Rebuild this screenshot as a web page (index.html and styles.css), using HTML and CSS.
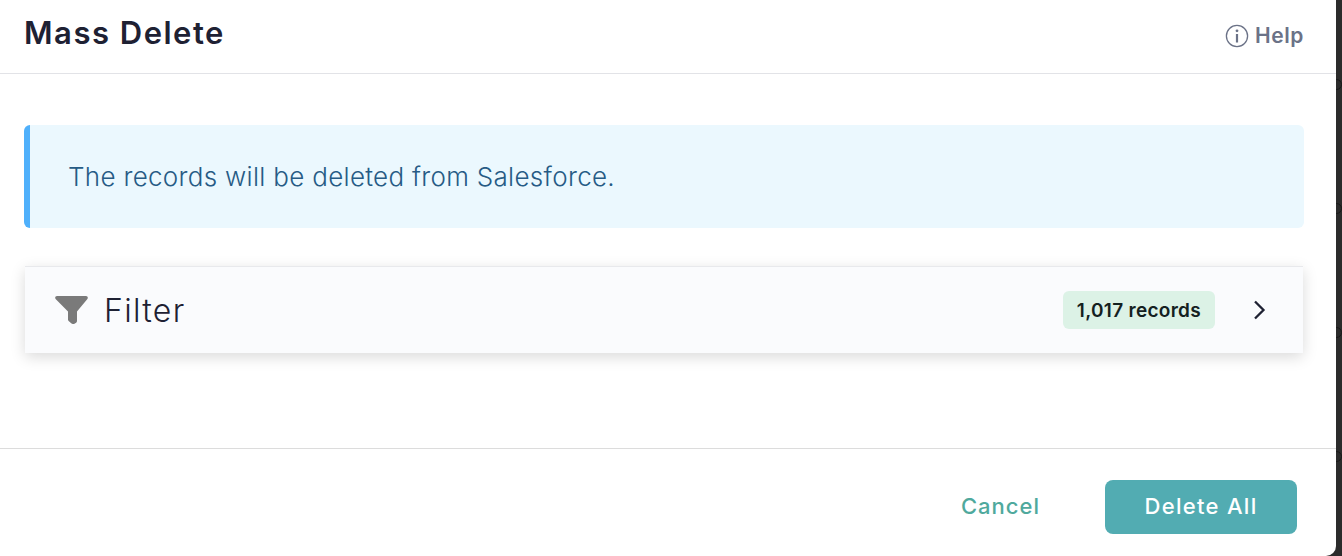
FILE: index.html
```html
<!DOCTYPE html>
<html lang="en">
<head>
  <meta charset="UTF-8" />
  <title>Mass Delete</title>
  <link rel="stylesheet" href="styles.css">
</head>
<body>
  <div class="modal">
    <header class="modal-header">
      <h1>Mass Delete</h1>
      <a class="help" href="#">
        <svg width="24" height="24" viewBox="0 0 24 24" fill="none" stroke="#6b7287" stroke-width="1.3">
          <circle cx="12" cy="12" r="10.6"/>
          <path d="M12 10v8.500" stroke-width="2.200"/>
          <circle cx="12" cy="6.800" r="1.400" fill="#6b7287" stroke="none"/>
        </svg>
        <span>Help</span>
      </a>
    </header>

    <div class="modal-body">
      <div class="notice">The records will be deleted from Salesforce.</div>

      <div class="filter-row">
        <svg class="filter-icon" width="33" height="28" viewBox="0 0 33 28">
          <path d="M2 0h29c1.600 0 2.400 1.800 1.400 3L22 15.500V25c0 .8-.3 1.300-.9 1.700l-1.600 1c-1.300.6-2.400.3-3.300-.5l-2.300-2c-.6-.5-.9-1-.9-1.700v-8L.6 3C-.4 1.800.4 0 2 0z" fill="#7a7a7a"/>
        </svg>
        <span class="filter-label">Filter</span>
        <span class="badge">1,017 records</span>
        <svg class="chevron" width="14" height="20" viewBox="0 0 14 20" fill="none" stroke="#1e2133" stroke-width="2.300">
          <path d="M2 1.500l8.500 8.500L2 18.500"/>
        </svg>
      </div>
    </div>

    <footer class="modal-footer">
      <button class="btn-cancel">Cancel</button>
      <button class="btn-delete">Delete All</button>
    </footer>
  </div>

  <div class="backdrop">
    <span class="ring"></span>
    <span class="ring"></span>
    <span class="ring"></span>
    <span class="ring"></span>
  </div>
</body>
</html>
```

FILE: styles.css
```css
* {
  box-sizing: border-box;
}

body {
  margin: 0;
  height: 556px;
  overflow: hidden;
  background: #2b2b2b;
  font-family: 'Inter', 'Liberation Sans', sans-serif;
  color: #1e2133;
  display: flex;
}

.modal {
  width: 1336px;
  height: 556px;
  flex: none;
  background: #fff;
  border-bottom-right-radius: 10px;
  display: flex;
  flex-direction: column;
}

.modal-header {
  height: 74px;
  padding: 0 38px 8px 24px;
  border-bottom: 1px solid #e2e3e7;
  display: flex;
  justify-content: space-between;
  align-items: center;
}

.modal-header h1 {
  margin: 0;
  font-size: 31px;
  font-weight: 600;
  letter-spacing: 1.5px;
}

.help {
  display: flex;
  align-items: center;
  gap: 6px;
  margin-top: 6px;
  margin-right: -6px;
  color: #6b7287;
  text-decoration: none;
  font-size: 21px;
  font-weight: 600;
  letter-spacing: 0.6px;
}

.modal-body {
  height: 375px;
  padding: 51px 32px 0 24px;
  border-bottom: 1px solid #dcdcdc;
}

.notice {
  height: 103px;
  padding-left: 38px;
  background: #ebf8fe;
  border-left: 6px solid #4fb0fb;
  border-radius: 6px;
  display: flex;
  align-items: center;
  font-size: 26px;
  font-weight: 300;
  letter-spacing: 0.3px;
  color: #265b85;
}

.filter-row {
  height: 87px;
  margin: 38px 1px 0;
  padding: 0 36px 0 30px;
  background: #fafbfd;
  border-top: 1px solid #e8e9ec;
  box-shadow: 0 4px 14px rgba(0, 0, 0, 0.15);
  display: flex;
  align-items: center;
}

.filter-label {
  margin-left: 16px;
  font-size: 32px;
  font-weight: 300;
  letter-spacing: 1.3px;
  flex: 1;
}

.badge {
  height: 38px;
  padding: 0 14px;
  margin-right: 38px;
  background: #dcf2e6;
  border-radius: 6px;
  color: #14211f;
  display: flex;
  align-items: center;
  font-size: 19px;
  font-weight: 600;
  letter-spacing: 0.3px;
}

.modal-footer {
  flex: 1;
  padding: 8px 39px 0 0;
  display: flex;
  justify-content: flex-end;
  align-items: center;
  gap: 65px;
}

.modal-footer button {
  font-family: inherit;
  font-size: 22px;
  font-weight: 500;
  border: none;
  cursor: pointer;
}

.btn-cancel {
  background: none;
  padding: 0 0 1px;
  color: #4fa99d;
  letter-spacing: 1px;
}

.btn-delete {
  width: 192px;
  height: 54px;
  margin-top: 1px;
  padding-bottom: 3px;
  background: #52acb2;
  border-radius: 8px;
  color: #fff;
  letter-spacing: 1.3px;
}

/* page behind the modal, only a sliver shows */
.backdrop {
  flex: 1;
  display: flex;
  flex-direction: column;
  gap: 113px;
  overflow: hidden;
  padding-top: 79px;
}

.ring {
  display: block;
  width: 11px;
  height: 11px;
  margin-left: -5px;
  border: 1px solid #191919;
  border-radius: 50%;
}
```
